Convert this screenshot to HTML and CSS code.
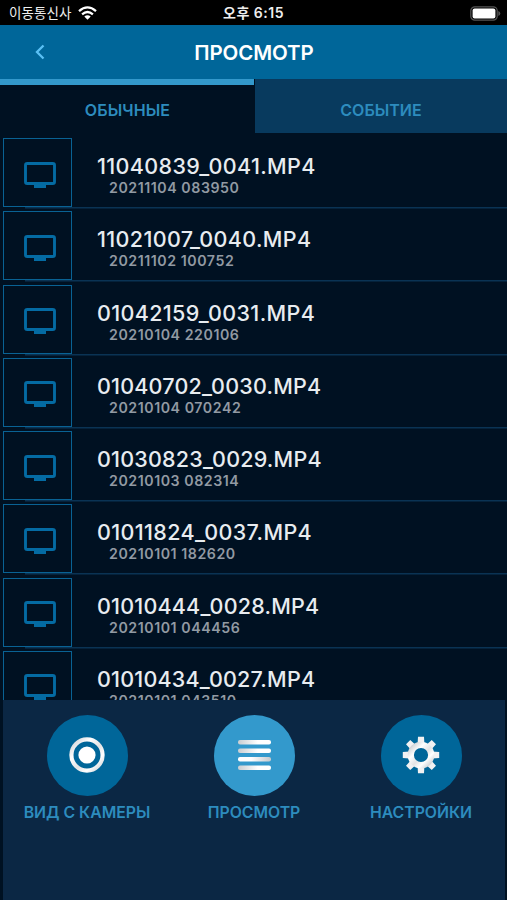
FILE: index.html
```html
<!DOCTYPE html>
<html lang="ru">
<head>
<meta charset="utf-8">
<meta name="viewport" content="width=device-width, initial-scale=1">
<title>ПРОСМОТР</title>
<link rel="stylesheet" href="styles.css">
</head>
<body>
<svg width="0" height="0" class="defs" aria-hidden="true">
  <defs>
    <linearGradient id="metal" x1="0" y1="0" x2="1" y2="1">
      <stop offset="0" stop-color="#c9cdd1"/><stop offset=".3" stop-color="#fff"/><stop offset=".55" stop-color="#e3e3e4"/><stop offset=".75" stop-color="#fff"/><stop offset="1" stop-color="#c9cdd1"/>
    </linearGradient>
    <linearGradient id="line-a"><stop offset="0" stop-color="#c8cdd1"/><stop offset=".6" stop-color="#fff"/></linearGradient>
    <linearGradient id="line-b"><stop offset=".4" stop-color="#fff"/><stop offset="1" stop-color="#c4c8cc"/></linearGradient>
    <symbol id="monitor" viewBox="0 0 32 27">
      <rect x="1.5" y="1.5" width="29" height="20" rx="1.8" fill="none" stroke="#046ba3" stroke-width="2.9"/>
      <path d="M10 22h12v4H10z" fill="#046ba3"/>
    </symbol>
  </defs>
</svg>
<div class="status">
  <div class="carrier">이동통신사</div>
  <svg class="wifi" width="19" height="14" viewBox="0 0 19 14" fill="none" stroke="#fff" stroke-width="2.3">
    <path d="M1 5.1Q9.5-2.3 18 5.1M4.1 8.3q5.4-4.6 10.8 0"/>
    <path d="M6.3 10.5q3.2-2.6 6.4 0L9.5 13.7z" fill="#fff" stroke="none"/>
  </svg>
  <div class="clock">오후 6:15</div>
  <svg class="battery" width="31" height="15" viewBox="0 0 31 15">
    <rect x=".8" y=".8" width="26.4" height="13.4" rx="4" fill="none" stroke="#555" stroke-width="1.2"/>
    <rect x="2.6" y="2.6" width="22.8" height="9.8" rx="2" fill="#fff"/>
    <path d="M28.3 5q2 .7 2 2.5t-2 2.5z" fill="#555"/>
  </svg>
</div>
<header class="header">
  <svg class="back" width="10" height="16" viewBox="0 0 10 16"><path d="M8.5 1.5 2 8l6.5 6.5" fill="none" stroke="#5bc0f5" stroke-width="2.3"/></svg>
  <h1>ПРОСМОТР</h1>
</header>
<nav class="tabs">
  <div class="tab active"><span>ОБЫЧНЫЕ</span></div>
  <div class="tab"><span>СОБЫТИЕ</span></div>
</nav>
<main class="list">
  <div class="row"><div class="thumb"><svg><use href="#monitor"/></svg></div><div class="info"><b class="wide">11040839_0041.MP4</b><small>20211104 083950</small></div></div>
  <div class="row"><div class="thumb"><svg><use href="#monitor"/></svg></div><div class="info"><b class="wide">11021007_0040.MP4</b><small>20211102 100752</small></div></div>
  <div class="row"><div class="thumb"><svg><use href="#monitor"/></svg></div><div class="info"><b class="wide">01042159_0031.MP4</b><small>20210104 220106</small></div></div>
  <div class="row"><div class="thumb"><svg><use href="#monitor"/></svg></div><div class="info"><b>01040702_0030.MP4</b><small>20210104 070242</small></div></div>
  <div class="row"><div class="thumb"><svg><use href="#monitor"/></svg></div><div class="info"><b>01030823_0029.MP4</b><small>20210103 082314</small></div></div>
  <div class="row"><div class="thumb"><svg><use href="#monitor"/></svg></div><div class="info"><b class="wide">01011824_0037.MP4</b><small>20210101 182620</small></div></div>
  <div class="row"><div class="thumb"><svg><use href="#monitor"/></svg></div><div class="info"><b>01010444_0028.MP4</b><small>20210101 044456</small></div></div>
  <div class="row"><div class="thumb"><svg><use href="#monitor"/></svg></div><div class="info"><b>01010434_0027.MP4</b><small>20210101 043510</small></div></div>
</main>
<footer class="dock">
  <div class="item">
    <div class="disc"><svg width="36" height="36" viewBox="-18 -18 36 36"><circle r="15.6" fill="none" stroke="url(#metal)" stroke-width="4.2"/><circle r="8.6" fill="#fff"/></svg></div>
    <span>ВИД С КАМЕРЫ</span>
  </div>
  <div class="item">
    <div class="disc light"><svg width="33" height="30" viewBox="0 0 33 30"><rect width="33" height="4.4" rx="2" fill="url(#line-a)"/><rect y="8.6" width="33" height="4.4" rx="2" fill="url(#line-a)"/><rect y="17.1" width="33" height="4.4" rx="2" fill="url(#line-b)"/><rect y="25.6" width="33" height="4.4" rx="2" fill="url(#line-a)"/></svg></div>
    <span>ПРОСМОТР</span>
  </div>
  <div class="item">
    <div class="disc"><svg width="38" height="38" viewBox="-19 -19 38 38">
      <g fill="#f1f1f2"><path id="teeth" d="M-3-18.2h6l.4 7h-6.8zM-3 18.2h6l.4-7h-6.8z"/><use href="#teeth" transform="rotate(45)"/><use href="#teeth" transform="rotate(90)"/><use href="#teeth" transform="rotate(135)"/></g>
      <circle r="10.2" fill="none" stroke="url(#metal)" stroke-width="6.2"/></svg></div>
    <span>НАСТРОЙКИ</span>
  </div>
</footer>
</body>
</html>
```
FILE: styles.css
```css
* { box-sizing: border-box; }
body {
  margin: 0;
  width: 507px;
  height: 900px;
  overflow: hidden;
  display: flex;
  flex-direction: column;
  background: #001122;
  font-family: Inter, "Noto Sans CJK KR", sans-serif;
}
svg { display: block; flex: none; }
.defs { position: absolute; }
.status {
  height: 25px;
  flex: none;
  display: grid;
  grid-template-columns: 77px 145px 1fr 31px;
  align-items: center;
  padding: 1px 6px 0 9px;
  background: #000;
  color: #eee;
  white-space: nowrap;
}
.carrier { font-size: 13.5px; letter-spacing: .1px; line-height: 24px; }
.wifi { margin-left: -8px; }
.clock { font-size: 14px; font-weight: 600; line-height: 24px; margin-left: -8px; letter-spacing: .5px; }
.header {
  height: 54px;
  flex: none;
  display: grid;
  grid-template-columns: 61px 1fr 60px;
  align-items: center;
  background: #006699;
}
.back { margin-left: 35px; margin-top: -2px; }
h1 { margin: 0; font-size: 20.5px; font-weight: 600; line-height: 55px; letter-spacing: -.1px; color: #fff; text-align: center; }
.tabs { height: 54px; flex: none; display: grid; grid-template-columns: 254px 252px; column-gap: 1px; }
.tab {
  display: flex;
  align-items: center;
  justify-content: center;
  padding-top: 8px;
  background: #083a5e;
  color: #2d8cbe;
  font-size: 16px;
  font-weight: 600;
}
.tab.active { background: #001122; border-top: 6px solid #3399cc; padding: 2px 0 0 1px; letter-spacing: .1px; }
.list { height: 567px; flex: none; padding-top: 4px; overflow: hidden; }
.row { height: 73.25px; display: flex; padding-left: 3px; background: linear-gradient(#0a3354, #0a3354) 25px 70px / 482px 1.5px no-repeat; }
.thumb { width: 69px; height: 69px; border: 1px solid #096294; display: grid; place-items: center; margin-top: 1px; flex: none; }
.thumb svg { width: 32px; height: 27px; margin-top: 5px; margin-left: 5px; }
.info { margin-left: 25px; padding-top: 15px; white-space: nowrap; }
.info b { display: block; font-size: 21.5px; font-weight: 550; line-height: 28px; letter-spacing: .2px; color: #e8ecf0; }
.info b.wide { letter-spacing: .36px; }
.info small { display: block; font-size: 14.2px; font-weight: 600; line-height: 16px; letter-spacing: .55px; margin-left: 12px; color: #929aa3; }
.dock {
  flex: 1;
  margin: 0 2px 0 3px;
  display: grid;
  grid-template-columns: repeat(3, 167px);
  justify-content: end;
  padding-top: 15px;
  background: #0b2744;
}
.item { display: flex; flex-direction: column; align-items: center; color: #2d8cbe; font-size: 15.8px; font-weight: 600; line-height: 20px; white-space: nowrap; }
.item span { margin-left: -1px; }
.disc { width: 81px; height: 81px; border-radius: 50%; background: #006699; display: grid; place-items: center; margin-bottom: 7px; }
.disc svg { margin: -1px 0 0 -1px; }
.disc.light { background: #3399cc; }
```
